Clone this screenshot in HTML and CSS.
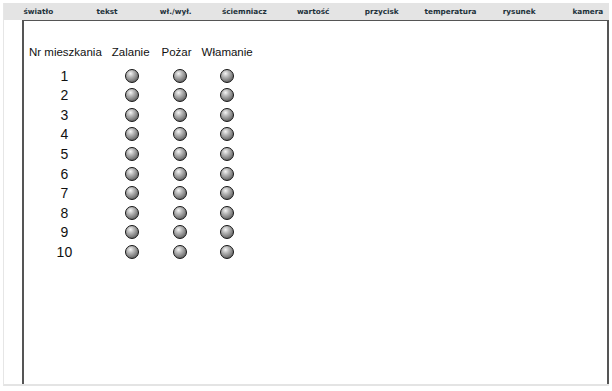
FILE: index.html
```html
<!DOCTYPE html>
<html>
  <head>
    <title>Alarmy</title>
    <link rel="stylesheet" href="styles.css">
  </head>
  <body>
    <div class="page">
      <div class="menu">
        <a href="#">światło</a>
        <a href="#">tekst</a>
        <a href="#">wł./wył.</a>
        <a href="#">ściemniacz</a>
        <a href="#">wartość</a>
        <a href="#">przycisk</a>
        <a href="#">temperatura</a>
        <a href="#">rysunek</a>
        <a href="#">kamera</a>
      </div>
      <div class="main">
        <div class="side"></div>
        <div class="panel">
          <div class="alarms">
            <div class="head">Nr mieszkania</div>
            <div class="head">Zalanie</div>
            <div class="head">Pożar</div>
            <div class="head">Włamanie</div>

            <div class="num">1</div><span class="led"></span><span class="led"></span><span class="led"></span>
            <div class="num">2</div><span class="led"></span><span class="led"></span><span class="led"></span>
            <div class="num">3</div><span class="led"></span><span class="led"></span><span class="led"></span>
            <div class="num">4</div><span class="led"></span><span class="led"></span><span class="led"></span>
            <div class="num">5</div><span class="led"></span><span class="led"></span><span class="led"></span>
            <div class="num">6</div><span class="led"></span><span class="led"></span><span class="led"></span>
            <div class="num">7</div><span class="led"></span><span class="led"></span><span class="led"></span>
            <div class="num">8</div><span class="led"></span><span class="led"></span><span class="led"></span>
            <div class="num">9</div><span class="led"></span><span class="led"></span><span class="led"></span>
            <div class="num">10</div><span class="led"></span><span class="led"></span><span class="led"></span>
          </div>
        </div>
      </div>
    </div>
  </body>
</html>
```

FILE: styles.css
```css
body {
  margin: 0;
  background: #fff;
  font-family: "Liberation Sans", Arial, sans-serif;
  overflow: hidden;
}
.page {
  margin: 3px 3px 0 3px;
  height: 381px;
  border-left: 1px solid #e6e6e6;
  border-bottom: 2px solid #e4e4e4;
  display: flex;
  flex-direction: column;
}
.menu {
  height: 17px;
  background: #e4e4e4;
  display: flex;
  align-items: center;
  white-space: nowrap;
  overflow: hidden;
}
.menu a {
  flex: 0 0 68.7px;
  text-align: center;
  font-family: "DejaVu Sans", Verdana, sans-serif;
  font-weight: bold;
  font-size: 7.3px;
  color: #1e323b;
  text-decoration: none;
}
.main {
  flex: 1;
  display: flex;
}
.side {
  width: 18px;
}
.panel {
  width: 579px;
  border-top: 1px solid #555;
  border-left: 2px solid #555;
  border-right: 2px solid #555;
  padding: 21px 0 0 5px;
}
.alarms {
  display: inline-grid;
  grid-template-columns: auto auto auto auto;
  grid-template-rows: 19.8px;
  grid-auto-rows: 19.6px;
  column-gap: 10px;
  justify-items: center;
  align-items: center;
}
.head {
  font-size: 11.5px;
  color: #111;
  align-self: start;
}
.head:nth-child(3) {
  margin-left: 2px;
}
.num {
  font-size: 14px;
  color: #111;
  margin-right: 2px;
}
.led {
  width: 12px;
  height: 12px;
  margin-left: 3px;
  border-radius: 50%;
  border: 1.5px solid #151515;
  background: radial-gradient(circle at 38% 30%, #f4f4f4 0%, #b8b8b8 30%, #777 68%, #3e3e3e 100%);
}
.led:nth-child(4n+3) {
  margin-left: 8px;
}
.led:nth-child(4n) {
  margin-left: 0;
}
```
